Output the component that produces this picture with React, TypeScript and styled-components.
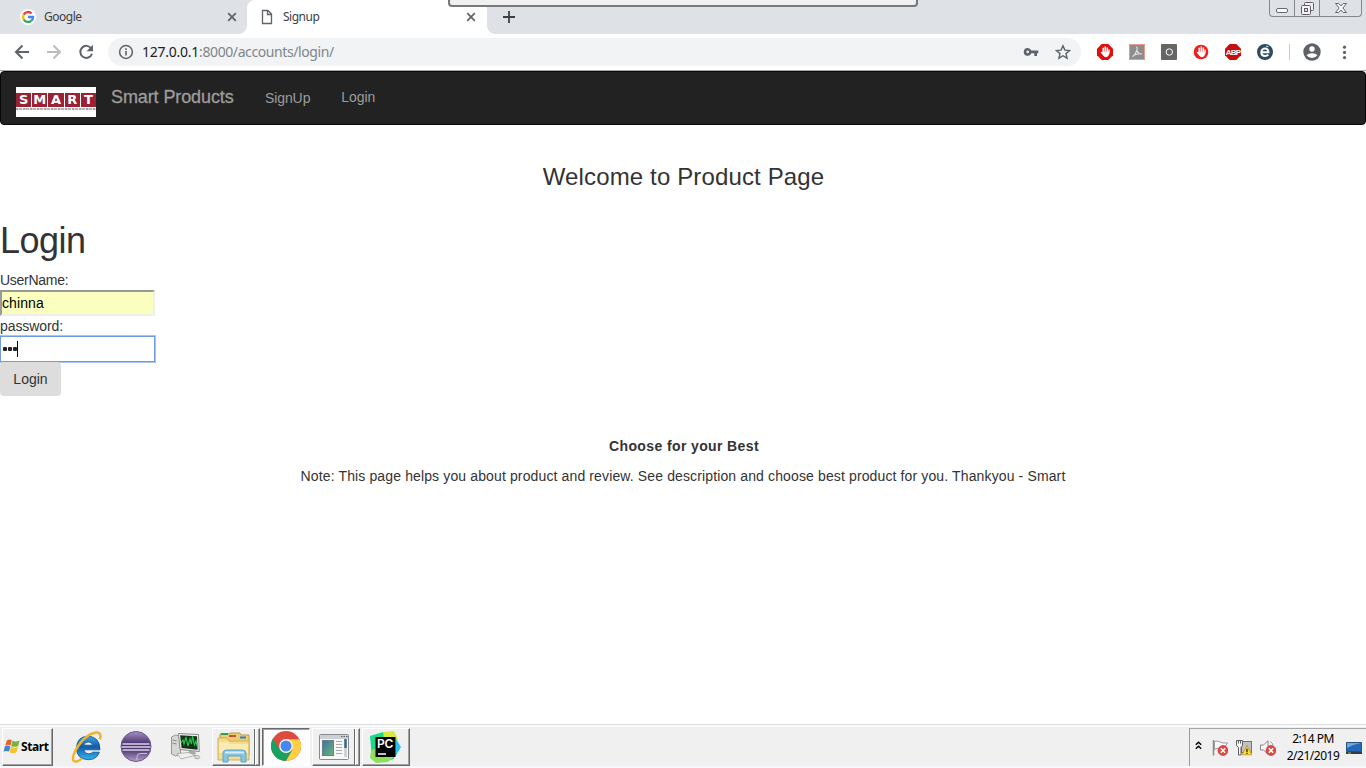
import React from "react";
import styled, { createGlobalStyle, css } from "styled-components";

const Global = createGlobalStyle`
  * { box-sizing: border-box; }
  html, body { margin: 0; padding: 0; background: #fff; overflow: hidden; }
  body { font-family: "Liberation Sans", Arial, sans-serif; font-size: 14px; color: #333; }
  svg { display: block; flex: none; }
`;

const Screen = styled.div`
  width: 1366px;
  height: 768px;
  display: flex;
  flex-direction: column;
  position: relative;
  overflow: hidden;
  background: #fff;
`;

/* ---------- browser ---------- */
const TabStrip = styled.div`
  height: 34px;
  flex: none;
  display: flex;
  background: #dee1e6;
`;
const Tab = styled.div<{ $active?: boolean }>`
  position: relative;
  width: ${(p) => (p.$active ? 240 : 247)}px;
  height: 34px;
  padding: ${(p) => (p.$active ? "0 11px 0 12px" : "0 10px 0 20px")};
  display: flex;
  align-items: center;
  ${(p) =>
    p.$active &&
    css`
      background: #fff;
      border-radius: 8px 8px 0 0;
      &::before, &::after {
        content: "";
        position: absolute;
        bottom: 0;
        width: 8px;
        height: 8px;
      }
      &::before { left: -8px; background: radial-gradient(circle at 0 0, transparent 7.5px, #fff 8px); }
      &::after { right: -8px; background: radial-gradient(circle at 100% 0, transparent 7.5px, #fff 8px); }
    `}
`;
const TabTitle = styled.span`
  flex: 1;
  margin-left: 8px;
  font: 12px/16px "Noto Sans", sans-serif;
  letter-spacing: -0.5px;
  color: #3c4043;
`;
const NewTab = styled.div`
  width: 44px;
  display: flex;
  align-items: center;
  justify-content: center;
`;
const WindowControls = styled.div`
  margin-left: auto;
  margin-right: 4px;
  width: 93px;
  height: 17px;
  display: flex;
  border: 1px solid #85878b;
  border-top: 0;
  border-radius: 0 0 4px 4px;
`;
const WindowButton = styled.div<{ $w: number }>`
  width: ${(p) => p.$w}px;
  display: flex;
  justify-content: center;
  & + & { border-left: 1px solid #85878b; }
`;
const DockHandle = styled.div`
  position: absolute;
  left: 448px;
  top: -3px;
  width: 470px;
  height: 10px;
  border: 2px solid #77787b;
  border-radius: 4px;
  background: #f0f0f0;
`;
const Toolbar = styled.div`
  height: 37px;
  flex: none;
  display: flex;
  align-items: center;
  padding: 0 14px 1px 14px;
  background: #fff;
  border-bottom: 1px solid #a9a9a9;
`;
const NavIcons = styled.div`
  display: flex;
  flex: none;
  gap: 16px;
  width: 94px;
`;
const Omnibox = styled.div`
  width: 973px;
  flex: none;
  height: 28px;
  padding: 0 10px;
  display: flex;
  align-items: center;
  border-radius: 14px;
  background: #f1f3f4;
`;
const Url = styled.span`
  flex: 1;
  margin-left: 8px;
  font: 14px/20px "Noto Sans", sans-serif;
  letter-spacing: -0.4px;
  color: #80868b;
`;
const UrlHost = styled.span`
  color: #202124;
  letter-spacing: -0.25px;
`;
const Extensions = styled.div`
  display: flex;
  gap: 16px;
  margin-left: 16px;
`;
const Divider = styled.div`
  width: 1px;
  height: 16px;
  margin: 0 13px 0 16px;
  background: #c8cacd;
`;

/* ---------- page ---------- */
const Page = styled.main`
  flex: 1;
`;
const Navbar = styled.nav`
  height: 54px;
  display: flex;
  padding: 15px 15px 0;
  background: #222;
  border: 1px solid #080808;
  border-radius: 4px;
  color: #9d9d9d;
`;
const Logo = styled.div`
  width: 80px;
  height: 30px;
  padding-top: 6px;
  background: #fff;
`;
const LogoRow = styled.div`
  display: grid;
  grid-template-columns: repeat(5, 1fr);
  gap: 1px;
`;
const LogoCell = styled.div`
  height: 14px;
  background: #9b2135;
  color: #fff;
  display: flex;
  justify-content: center;
  font: bold 13px/14px "DejaVu Sans", sans-serif;
`;
const LogoCaption = styled.div`
  height: 2px;
  margin-top: 1px;
  background: repeating-linear-gradient(90deg, #a5a5a5 0 2px, #d5d5d5 2px 3px, #b5b5b5 3px 6px, #eee 6px 7px);
`;
const Brand = styled.span`
  width: 123px;
  margin-left: 15px;
  font-size: 18px;
  line-height: 20px;
  letter-spacing: -0.1px;
  white-space: nowrap;
  -webkit-text-stroke: 0.3px #9d9d9d;
`;
const NavLink = styled.span<{ $drop?: number }>`
  margin-left: 31px;
  padding-top: ${(p) => p.$drop || 0}px;
  line-height: 20px;
  letter-spacing: -0.1px;
`;
const Welcome = styled.h3`
  margin: 39px 0 0;
  padding-left: 1px;
  text-align: center;
  font-size: 24px;
  font-weight: 400;
  line-height: 26px;
  letter-spacing: 0.14px;
`;
const LoginForm = styled.div`
  margin-top: 31px;
  height: 175px;
`;
const Heading = styled.h1`
  margin: 0 0 10px;
  font-size: 36px;
  font-weight: 400;
  line-height: 39px;
  letter-spacing: -0.5px;
`;
const Label = styled.div<{ $ls: number }>`
  line-height: 20px;
  letter-spacing: ${(p) => p.$ls}px;
`;
const Field = styled.div<{ $focus?: boolean }>`
  width: 155px;
  height: 26px;
  display: flex;
  align-items: center;
  color: #000;
  ${(p) =>
    p.$focus
      ? css`
          padding-left: 1px;
          border: 1px solid #6f9be0;
          box-shadow: 0 0 0 1px #a9c6f3;
          background: #fff;
        `
      : css`
          padding: 0 0 1px 0;
          border: 2px solid;
          border-color: #9a9a9a #eee #eee #9a9a9a;
          background: #faffbd;
          letter-spacing: 0.1px;
        `}
`;
const Dots = styled.span`
  display: flex;
  gap: 1px;
  padding-left: 1px;
  height: 16px;
  align-items: center;
  border-right: 1px solid #000;
`;
const Dot = styled.i`
  width: 4px;
  height: 4px;
  border-radius: 1px;
  background: #222;
`;
const LoginButton = styled.button`
  display: block;
  position: relative;
  width: 61px;
  height: 34px;
  padding: 0;
  border: 0;
  border-radius: 4px;
  background: #ddd;
  color: #333;
  font: 14px/20px "Liberation Sans", Arial, sans-serif;
`;
const Note = styled.p<{ $bold?: boolean }>`
  margin: 0 0 10px;
  padding-left: ${(p) => (p.$bold ? 2 : 0)}px;
  text-align: center;
  line-height: 20px;
  font-weight: ${(p) => (p.$bold ? 700 : 400)};
  letter-spacing: ${(p) => (p.$bold ? 0.38 : 0.129)}px;
`;
const Notes = styled.div`
  margin-top: 40px;
`;

/* ---------- taskbar ---------- */
const Taskbar = styled.footer`
  height: 44px;
  flex: none;
  display: flex;
  padding: 3px 0 2px 2px;
  border-top: 1px solid #dcdcdc;
  background: linear-gradient(#f8fbfe 0 2px, #f0f0f0 2px 41px, #f5f9fd 41px);
`;
const raised = css`
  border: 1px solid;
  border-color: #fff #696969 #696969 #fff;
  box-shadow: inset -1px -1px 0 #a0a0a0;
  background: #f0f0f0;
`;
const StartButton = styled.div`
  ${raised}
  width: 51px;
  height: 38px;
  display: flex;
  align-items: center;
  gap: 1px;
  font: bold 12px/16px "Noto Sans", sans-serif;
  letter-spacing: -0.4px;
  color: #000;
`;
const QuickLaunch = styled.div`
  width: 159px;
  padding-left: 19px;
  display: flex;
  align-items: center;
  gap: 18px;
`;
const TaskButton = styled.div<{ $pressed?: boolean; $stack?: boolean }>`
  ${raised}
  position: relative;
  width: 48px;
  height: 38px;
  margin-right: 2px;
  padding-right: ${(p) => (p.$stack ? 5 : 2)}px;
  display: flex;
  align-items: center;
  justify-content: center;
  ${(p) =>
    p.$pressed &&
    css`
      border-color: #696969 #fff #fff #696969;
      box-shadow: inset 1px 1px 0 #a0a0a0;
      background: #fcfcfc;
      padding: 0 1px 2px 0;
    `}
  ${(p) =>
    p.$stack &&
    css`
      &::after {
        content: "";
        position: absolute;
        right: 3px;
        top: 0;
        bottom: 0;
        width: 2px;
        background: linear-gradient(90deg, #696969 1px, #fff 1px);
      }
    `}
`;
const Tray = styled.div`
  margin-left: auto;
  width: 177px;
  height: 38px;
  display: flex;
  align-items: center;
  padding: 0 4px 0 5px;
  border-left: 1px solid #9b9b9b;
  border-top: 1px solid #a5a5a5;
`;
const Clock = styled.div`
  width: 70px;
  margin: -2px 0 0 4px;
  text-align: center;
  font: 12px/17px "Noto Sans", sans-serif;
  letter-spacing: -0.48px;
  color: #000;
`;
const TrayIcons = styled.div`
  display: flex;
  gap: 8px;
  margin-left: 10px;
`;

const CloseX = () => (
  <svg width="10" height="10" viewBox="0 0 10 10">
    <path d="M1.2 1.2l7.6 7.6M8.8 1.2L1.2 8.8" stroke="#5f6368" strokeWidth="1.7" />
  </svg>
);

const GoogleIcon = () => (
  <svg width="16" height="16" viewBox="0 0 16 16">
    <circle cx="8" cy="8" r="8" fill="#fff" />
    <g fill="none" strokeWidth="2.4">
      <path d="M3.7 5.6A5 5 0 0 1 11.6 4.5" stroke="#ea4335" />
      <path d="M3.7 5.6A5 5 0 0 0 3.7 10.5" stroke="#fbbc05" />
      <path d="M3.7 10.5A5 5 0 0 0 11.2 11.9" stroke="#34a853" />
      <path d="M8 8h5A5 5 0 0 1 11.2 11.9" stroke="#4285f4" />
    </g>
  </svg>
);

const Hand = () => (
  <g fill="none" stroke="#fff" strokeLinecap="round">
    <path d="M6.2 8V4.3M8.2 8V3M10.2 8V4" strokeWidth="1.5" />
    <path d="M12 6v3M4.4 8.4L6 10" strokeWidth="1.4" />
    <path d="M5.8 8.2h5.8v2.2q-.5 2.3-2.8 2.3T5.800 10z" fill="#fff" strokeWidth="1" />
  </g>
);

const StartFlag = () => (
  <svg width="17" height="18" viewBox="0 0 17 18">
    <path d="M3.8 2.6Q6.200 .6 8.800 2.300L7.600 7.600Q5 6 2.300 7.500z" fill="#e8602c" />
    <path d="M9.500 2.700Q12.500 4.400 16.600 2.500L15.200 8Q11.500 9.700 8.200 8z" fill="#76b53a" />
    <path d="M2 8.300Q4.700 6.800 7.400 8.400L6.100 13.600Q3.400 12.200.5 13.600z" fill="#3e86d2" />
    <path d="M8 8.800Q11.300 10.600 15 8.900L13.500 14.300Q10 16 6.700 14.300z" fill="#f9c22e" />
  </svg>
);

const IEIcon = () => (
  <svg width="30" height="32" viewBox="0 0 30 32">
    <defs>
      <linearGradient id="ie" x2="0" y2="1">
        <stop stopColor="#3fa5e0" />
        <stop offset=".45" stopColor="#0f5ca8" />
        <stop offset="1" stopColor="#35b4ee" />
      </linearGradient>
    </defs>
    <path
      fillRule="evenodd"
      fill="url(#ie)"
      stroke="#0f4f92"
      strokeWidth=".8"
      d="M28 18.800H11.900q.6 4 4.600 4 3 0 4.200-1.600h6.700Q24.800 28.700 16.300 28.700 4.600 28.200 4.400 17 5 5.300 16.200 5.200 28 5.900 28 18.800zM11.800 14.200h8.800q-.6-3.200-4.300-3.200-3.600 0-4.500 3.200z"
    />
    <path d="M27.800 8.500Q30 2.300 24.800 1.300 14 3 6.500 14.500-1.500 27 2 30q3 1.700 8-2.600" fill="none" stroke="#efb42a" strokeWidth="2.500" />
  </svg>
);

const EclipseIcon = () => (
  <svg width="32" height="32" viewBox="0 0 32 32">
    <defs>
      <linearGradient id="ec" x2="0" y2="1">
        <stop stopColor="#a590c2" />
        <stop offset=".42" stopColor="#4a3270" />
        <stop offset=".6" stopColor="#4d376f" />
        <stop offset="1" stopColor="#b3a0ca" />
      </linearGradient>
    </defs>
    <circle cx="16" cy="15.500" r="15" fill="url(#ec)" stroke="#6c5490" />
    <path d="M2.500 13h27M1.500 16h29M2.500 19h27" stroke="#ddd2ea" strokeWidth="1.500" />
    <path d="M17 29.500v-4q0-3 4-3h6" stroke="#cbbedb" fill="none" />
  </svg>
);

const MonitorIcon = () => (
  <svg width="32" height="30" viewBox="0 0 32 30">
    <path d="M1.500 5l4-2 5 1v18l-5 2-4-2z" fill="#d6d6d2" stroke="#85867f" strokeWidth=".8" />
    <path d="M2.500 8l4 1M2.500 11l4 1" stroke="#8b8b86" />
    <path d="M8.500 1.500l20 1 .8 17-19.300-2z" fill="#f0f0ec" stroke="#888" />
    <path d="M10.200 3.200l16.800 1 .6 13.600-16-1.800z" fill="#14301b" />
    <path d="M11 11l2-3 1 4 2-7 2 9 2-7 1.500 5 1-8 2 9 1.500-4 1 5" fill="none" stroke="#27c046" strokeWidth="1.200" />
    <path d="M19 19h6l1 3.500-8-.5z" fill="#aaa9a5" />
    <path d="M7 21.500l12-1 6 3-14 3.500z" fill="#efefed" stroke="#999" strokeWidth=".7" />
    <path d="M25 23.500q4-1 5 2-1 2-5 1z" fill="#ddd" stroke="#888" strokeWidth=".6" />
  </svg>
);

const FolderIcon = () => (
  <svg width="34" height="32" viewBox="0 0 34 32">
    <path d="M3 3h9l1-1h10l1 2h8v20H3z" fill="#e9cf74" stroke="#bd9a45" />
    <path d="M4 3h7" stroke="#23a65b" strokeWidth="2" />
    <path d="M12 5h7" stroke="#d34b34" strokeWidth="2" />
    <path d="M23 6.500h6" stroke="#3578ce" strokeWidth="2" />
    <path d="M1 7h9l2 3h20v19H1z" fill="#f3dc8c" stroke="#cfaf58" />
    <path d="M2 11h9l2 2h18v9H2z" fill="#f9ebb2" />
    <path d="M6 31V22q0-3 4-3h15q4 0 4 3v9h-5v-6H11v6z" fill="#86c3e4" stroke="#5aa5cf" />
    <path d="M8 21.500h19" stroke="#d5effc" strokeWidth="2" />
  </svg>
);

const ChromeIcon = () => (
  <svg width="30" height="30" viewBox="0 0 30 30">
    <circle cx="15" cy="15" r="15" fill="#dd4b3e" />
    <path d="M2 7.500A15 15 0 0 0 15 30L21.500 18.700 15 21.800 8.800 18.700z" fill="#1aa15f" />
    <path d="M15 8.200h13.400A15 15 0 0 1 15 30l6.500-11.300z" fill="#ffce43" />
    <circle cx="15" cy="15" r="6.900" fill="#f4f4f4" />
    <circle cx="15" cy="15" r="5.500" fill="#4587ed" />
  </svg>
);

const WindowIcon = () => (
  <svg width="30" height="26" viewBox="0 0 30 26">
    <defs>
      <linearGradient id="pane" x2="1" y2="1">
        <stop stopColor="#3773a5" />
        <stop offset="1" stopColor="#73b376" />
      </linearGradient>
    </defs>
    <rect x=".5" y=".5" width="29" height="25" rx="1" fill="#f7f7f7" stroke="#858b91" />
    <path d="M1 3h28" stroke="#cbd0d6" strokeWidth="4" />
    <path d="M22 2.500h1.500m1 0h1.500m1 0h1.500" stroke="#59616a" />
    <rect x="3.500" y="6.500" width="11" height="15" fill="url(#pane)" stroke="#6d7e87" />
    <path d="M17 7.500h6m-6 3h6m-6 3h6m-6 3h6m-6 3h6" stroke="#aaa" />
    <path d="M26.500 5v9" stroke="#316589" strokeWidth="2.500" />
    <path d="M26.500 14v9" stroke="#ccc" strokeWidth="2.500" />
  </svg>
);

const PyCharmIcon = () => (
  <svg width="32" height="32" viewBox="0 0 32 32">
    <path d="M1 5L14 1l13 5-2 22-12 3-10-3z" fill="#20d789" />
    <path d="M14 1l11-1 4 8-4 18-8-4z" fill="#d8e83f" />
    <path d="M27 8l5 8-6 10z" fill="#25c4ea" />
    <path d="M2 20l9-6 14 12-6 5-12 1-6-5z" fill="#8ee05a" />
    <rect x="6.500" y="6" width="20" height="20" fill="#000" />
    <text x="8" y="17" fill="#fff" fontFamily="Inter, sans-serif" fontSize="12" fontWeight="600" letterSpacing="-.3">PC</text>
    <path d="M9 23h8" stroke="#fff" strokeWidth="1.500" />
  </svg>
);

const ErrorBadge = () => (
  <g transform="translate(11 10.500)">
    <circle r="5" fill="#e0483f" stroke="#b9322b" strokeWidth=".6" />
    <path d="M-2.200-2.200L2.200 2.200M2.200-2.200L-2.200 2.200" stroke="#fff" strokeWidth="1.600" />
  </g>
);

export default function App() {
  return (
    <>
      <Global />
      <Screen>
        <TabStrip>
          <Tab>
            <GoogleIcon />
            <TabTitle>Google</TabTitle>
            <CloseX />
          </Tab>
          <Tab $active>
            <svg width="16" height="16" viewBox="0 0 16 16">
              <path d="M3.500 1.500h5.500l3.500 3.500v9.500H3.500zM8.500 1.500v4h4" fill="none" stroke="#5f6368" strokeWidth="1.300" />
            </svg>
            <TabTitle>Signup</TabTitle>
            <CloseX />
          </Tab>
          <NewTab>
            <svg width="12" height="12" viewBox="0 0 12 12">
              <path d="M6 0v12M0 6h12" stroke="#3c4043" strokeWidth="1.800" />
            </svg>
          </NewTab>
          <WindowControls>
            <WindowButton $w={24}>
              <svg width="12" height="16" viewBox="0 0 12 16">
                <rect x=".5" y="8.500" width="11" height="4" rx="1.500" fill="#fff" stroke="#66686d" />
              </svg>
            </WindowButton>
            <WindowButton $w={25}>
              <svg width="13" height="16" viewBox="0 0 13 16">
                <rect x="3.500" y="2.500" width="9" height="8" rx="1" fill="#f3f3f3" stroke="#5c5e63" />
                <rect x=".5" y="5.500" width="9" height="9" rx="1" fill="#f3f3f3" stroke="#5c5e63" />
                <rect x="3.500" y="8.500" width="3" height="3" fill="#dee1e6" stroke="#5c5e63" />
              </svg>
            </WindowButton>
            <WindowButton $w={42}>
              <svg width="12" height="16" viewBox="0 0 12 16">
                <path
                  d="M.5 3.500h3.300L6 6l2.200-2.500h3.300L7.900 8l3.600 4.500H8.200L6 10l-2.200 2.500H.5L4.100 8z"
                  fill="#f7f7f7"
                  stroke="#66686d"
                />
              </svg>
            </WindowButton>
          </WindowControls>
        </TabStrip>
        <DockHandle />

        <Toolbar>
          <NavIcons>
            <svg width="16" height="16" viewBox="0 0 16 16">
              <path d="M15 8H2.500M8.500 1.500L2 8l6.500 6.500" fill="none" stroke="#5f6368" strokeWidth="2" />
            </svg>
            <svg width="16" height="16" viewBox="0 0 16 16">
              <path d="M1 8h12.500M7.500 1.500L14 8l-6.500 6.500" fill="none" stroke="#b9bbbe" strokeWidth="2" />
            </svg>
            <svg width="16" height="16" viewBox="0 0 16 16">
              <path d="M13.300 4.500A6 6 0 1 0 14 9.800" fill="none" stroke="#5f6368" strokeWidth="2" />
              <path d="M15 .8v6.500H8.500z" fill="#5f6368" />
            </svg>
          </NavIcons>
          <Omnibox>
            <svg width="16" height="16" viewBox="0 0 16 16">
              <circle cx="8" cy="8" r="6.400" fill="none" stroke="#5f6368" strokeWidth="1.500" />
              <path d="M8 7v4.500M8 4.300V6" stroke="#5f6368" strokeWidth="1.600" />
            </svg>
            <Url>
              <UrlHost>127.0.0.1</UrlHost>:8000/accounts/login/
            </Url>
            <svg width="16" height="16" viewBox="0 0 16 16">
              <path
                d="M4.700 4a3.900 3.900 0 0 1 3.600 2.500h7V9.300h-1.300V12h-2.700V9.300H8.300A3.900 3.900 0 1 1 4.700 4zm0 2.600a1.300 1.300 0 1 0 0 2.600 1.300 1.300 0 0 0 0-2.600z"
                fill="#5f6368"
                fillRule="evenodd"
              />
            </svg>
            <svg width="16" height="16" viewBox="0 0 16 16" style={{ marginLeft: 16 }}>
              <path d="M8 1.800l1.900 4.300 4.700.4-3.600 3.100 1.100 4.600L8 11.700l-4.100 2.500L5 9.600 1.400 6.500l4.700-.4z" fill="none" stroke="#5f6368" strokeWidth="1.400" />
            </svg>
          </Omnibox>
          <Extensions>
            <svg width="16" height="16" viewBox="0 0 16 16">
              <path d="M4.700 0h6.600L16 4.700v6.600L11.300 16H4.700L0 11.300V4.700z" fill="#e40d0d" />
              <Hand />
            </svg>
            <svg width="16" height="16" viewBox="0 0 16 16">
              <rect x=".5" y=".5" width="15" height="15" fill="#8d8d8d" stroke="#e89b8c" />
              <path d="M7.200 3q1.600 0 .6 3.500Q6.500 10.500 3.500 12.700M7.800 6.500q2 4 5 3.500-4-1-8 1.300" fill="none" stroke="#e4e4e4" strokeWidth="1.100" />
            </svg>
            <svg width="16" height="16" viewBox="0 0 16 16">
              <rect width="16" height="16" rx="1" fill="#666" />
              <circle cx="8.300" cy="8" r="3.200" fill="none" stroke="#fff" />
            </svg>
            <svg width="16" height="16" viewBox="0 0 16 16">
              <circle cx="8" cy="8" r="7.300" fill="#f31c1c" />
              <Hand />
            </svg>
            <svg width="16" height="16" viewBox="0 0 16 16">
              <path d="M4.700 0h6.600L16 4.700v6.600L11.300 16H4.700L0 11.300V4.700z" fill="#c70d0d" />
              <text x="8" y="11" textAnchor="middle" fill="#fff" fontFamily="Liberation Sans, sans-serif" fontSize="8" fontWeight="700" letterSpacing="-.8">ABP</text>
            </svg>
            <svg width="16" height="16" viewBox="0 0 16 16">
              <circle cx="8" cy="8" r="8" fill="#2d4a5e" />
              <path d="M4.300 8.300h7.200Q11.200 4.600 8 4.600T4.300 8.300Q4.600 12 8 12q2.200 0 3.300-1.400" fill="none" stroke="#fff" strokeWidth="2" />
              <path d="M9 2.500h2.500" stroke="#9fd3df" strokeWidth="1.300" />
            </svg>
          </Extensions>
          <Divider />
          <svg width="18" height="18" viewBox="0 0 18 18">
            <circle cx="9" cy="9" r="8.700" fill="#5f6368" />
            <circle cx="9" cy="6" r="2.700" fill="#fff" />
            <path d="M3.600 12.300Q5 10.300 9 10.300t5.400 2Q12.500 15 9 15t-5.400-2.700z" fill="#fff" />
          </svg>
          <svg width="16" height="16" viewBox="0 0 16 16" style={{ marginLeft: 15 }}>
            <g fill="#5f6368">
              <circle cx="8.500" cy="3.200" r="1.600" />
              <circle cx="8.500" cy="8.400" r="1.600" />
              <circle cx="8.500" cy="13.600" r="1.600" />
            </g>
          </svg>
        </Toolbar>

        <Page>
          <Navbar>
            <Logo>
              <LogoRow>
                {"SMART".split("").map((letter) => (
                  <LogoCell key={letter}>{letter}</LogoCell>
                ))}
              </LogoRow>
              <LogoCaption />
            </Logo>
            <Brand>Smart Products</Brand>
            <NavLink $drop={1}>SignUp</NavLink>
            <NavLink>Login</NavLink>
          </Navbar>
          <Welcome>Welcome to Product Page</Welcome>
          <LoginForm>
            <Heading>Login</Heading>
            <Label $ls={-0.28}>UserName:</Label>
            <Field>chinna</Field>
            <Label $ls={-0.08}>password:</Label>
            <Field $focus>
              <Dots>
                <Dot />
                <Dot />
                <Dot />
              </Dots>
            </Field>
            <LoginButton>Login</LoginButton>
          </LoginForm>
          <Notes>
            <Note $bold>Choose for your Best</Note>
            <Note>Note: This page helps you about product and review. See description and choose best product for you. Thankyou - Smart</Note>
          </Notes>
        </Page>

        <Taskbar>
          <StartButton>
            <StartFlag />
            Start
          </StartButton>
          <QuickLaunch>
            <IEIcon />
            <EclipseIcon />
            <MonitorIcon />
          </QuickLaunch>
          <TaskButton $stack>
            <FolderIcon />
          </TaskButton>
          <TaskButton $pressed>
            <ChromeIcon />
          </TaskButton>
          <TaskButton $stack>
            <WindowIcon />
          </TaskButton>
          <TaskButton>
            <PyCharmIcon />
          </TaskButton>
          <Tray>
            <svg width="7" height="9" viewBox="0 0 7 9" style={{ marginTop: -4 }}>
              <path d="M.8 3.800L3.500 1.200l2.700 2.600M.8 7.800l2.700-2.600 2.700 2.600" fill="none" stroke="#000" strokeWidth="1.400" />
            </svg>
            <TrayIcons>
              <svg width="16" height="16" viewBox="0 0 16 16">
                <path d="M1.500 0v15.500" stroke="#8a8a8a" strokeWidth="1.500" />
                <path d="M2.500 1.500q3-1 5.500.5t7.500 1l-2 3 .5 3.500q-3 1-6-.4t-5.500.2z" fill="#fafafa" stroke="#9a9a9a" />
                <ErrorBadge />
              </svg>
              <svg width="16" height="16" viewBox="0 0 16 16">
                <rect x="5.500" y="1.500" width="10" height="11" fill="#c2c2c2" stroke="#737373" />
                <path d="M.5 .5h6v5L5 7.500v7.500H2.500V7.500L.5 5.500z" fill="#f4f4f4" stroke="#5f5f5f" />
                <path d="M2.500 .5v3m2-3v3" stroke="#5f5f5f" />
                <path d="M11 5.500l5 9.300H6z" fill="#ffdc2e" stroke="#ad8b16" strokeWidth=".7" />
                <path d="M11 8.800v3.200M11 12.700v1.300" stroke="#222" strokeWidth="1.300" />
              </svg>
              <svg width="16" height="16" viewBox="0 0 16 16">
                <path d="M.5 5h3L8 .8v13.400L3.500 10h-3z" fill="#f7f7f7" stroke="#868686" />
                <path d="M10.500 1.500q2.500 2 2.500 4" fill="none" stroke="#999" />
                <ErrorBadge />
              </svg>
            </TrayIcons>
            <Clock>
              2:14 PM
              <br />
              2/21/2019
            </Clock>
            <svg width="16" height="14" viewBox="0 0 16 14" style={{ marginLeft: "auto" }}>
              <path d="M.5 1.500h15v9H.5z" fill="#2369b8" stroke="#274f7c" />
              <path d="M1 7q7-4 14-5H1z" fill="#68a7df" />
              <path d="M0 12h16" stroke="#333a44" strokeWidth="2" />
              <path d="M2 12h3" stroke="#83c95d" />
            </svg>
          </Tray>
        </Taskbar>
      </Screen>
    </>
  );
}
